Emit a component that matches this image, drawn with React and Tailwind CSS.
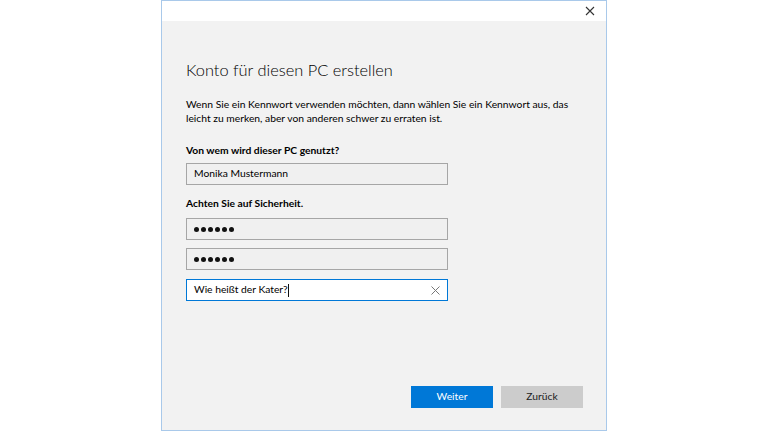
import React from "react";

const font = { fontFamily: 'Lato, "Noto Sans", Arial, sans-serif' };

function Dots() {
  return (
    <div className="flex gap-[2px] items-center">
      {Array.from({ length: 6 }).map((_, i) => (
        <span key={i} className="block w-[5px] h-[5px] rounded-full bg-[#111]" />
      ))}
    </div>
  );
}

export default function App() {
  return (
    <div className="w-[768px] h-[432px] bg-white flex justify-center" style={font}>
      <div className="w-[446px] h-[431px] border border-[#a9c9ea] flex flex-col">
        <div className="h-[20px] bg-white flex justify-end items-center pr-[11px]">
          <svg width="10" height="10" viewBox="0 0 10 10">
            <path d="M1 1 L9 9 M9 1 L1 9" stroke="#333" strokeWidth="1.1" />
          </svg>
        </div>
        <div className="flex-1 bg-[#f2f2f2] flex flex-col pl-[24px] pr-[23px] pb-[22px]">
          <h1 className="mt-[37px] text-[16.4px] leading-[24px] font-light text-[#000]">
            Konto für diesen PC erstellen
          </h1>
          <p className="mt-[15px] text-[10.3px] leading-[14px] text-[#000] whitespace-nowrap">
            Wenn Sie ein Kennwort verwenden möchten, dann wählen Sie ein Kennwort aus, das
            <br />
            leicht zu merken, aber von anderen schwer zu erraten ist.
          </p>
          <div className="mt-[18px] text-[10.3px] leading-[14px] font-bold text-[#000]">
            Von wem wird dieser PC genutzt?
          </div>
          <div className="mt-[6px] w-[262px] h-[22px] border border-[#a6a6a6] bg-[#f0f0f0] flex items-center pl-[7px] text-[10.3px] text-[#000]">
            Monika Mustermann
          </div>
          <div className="mt-[11px] text-[10.3px] leading-[14px] font-bold text-[#000]">
            Achten Sie auf Sicherheit.
          </div>
          <div className="mt-[8px] w-[262px] h-[22px] border border-[#a6a6a6] bg-[#f0f0f0] flex items-center pl-[7px]">
            <Dots />
          </div>
          <div className="mt-[8px] w-[262px] h-[22px] border border-[#a6a6a6] bg-[#f0f0f0] flex items-center pl-[7px]">
            <Dots />
          </div>
          <div className="mt-[9px] w-[262px] h-[22px] border border-[#0078d7] bg-white flex items-center pl-[7px] pr-[7px] text-[10.3px] text-[#000]">
            <span>Wie heißt der Kater?</span>
            <span className="block w-[1px] h-[13px] bg-[#111]" />
            <span className="flex-1" />
            <svg width="9" height="9" viewBox="0 0 9 9">
              <path d="M0.5 0.5 L8.5 8.5 M8.5 0.5 L0.5 8.5" stroke="#777" strokeWidth="1" />
            </svg>
          </div>
          <div className="mt-auto flex justify-end gap-[8px]">
            <div className="w-[82px] h-[22px] bg-[#0078d7] text-white text-[10.3px] flex items-center justify-center">
              Weiter
            </div>
            <div className="w-[82px] h-[22px] bg-[#cccccc] text-[#222] text-[10.3px] flex items-center justify-center">
              Zurück
            </div>
          </div>
        </div>
      </div>
    </div>
  );
}
